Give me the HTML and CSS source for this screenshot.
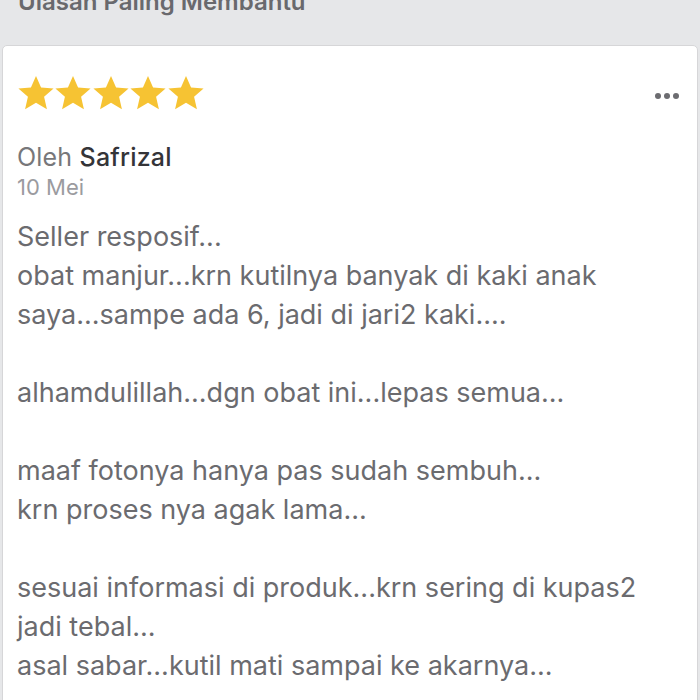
FILE: index.html
```html
<!DOCTYPE html>
<html>
<head>
<meta charset="utf-8">
<link rel="stylesheet" href="styles.css">
</head>
<body>
<div class="page">
  <div class="section-title">Ulasan Paling Membantu</div>
  <div class="card">
    <div class="card-head">
      <div class="stars">
        <svg viewBox="0 0 24 24" class="star"><path d="M12 1.2l3.2 7.3 7.9.7-6 5.2 1.8 7.8L12 18.1 5.1 22.2l1.8-7.8-6-5.2 7.9-.7z"/></svg>
        <svg viewBox="0 0 24 24" class="star"><path d="M12 1.2l3.2 7.3 7.9.7-6 5.2 1.8 7.8L12 18.1 5.1 22.2l1.8-7.8-6-5.2 7.9-.7z"/></svg>
        <svg viewBox="0 0 24 24" class="star"><path d="M12 1.2l3.2 7.3 7.9.7-6 5.2 1.8 7.8L12 18.1 5.1 22.2l1.8-7.8-6-5.2 7.9-.7z"/></svg>
        <svg viewBox="0 0 24 24" class="star"><path d="M12 1.2l3.2 7.3 7.9.7-6 5.2 1.8 7.8L12 18.1 5.1 22.2l1.8-7.8-6-5.2 7.9-.7z"/></svg>
        <svg viewBox="0 0 24 24" class="star"><path d="M12 1.2l3.2 7.3 7.9.7-6 5.2 1.8 7.8L12 18.1 5.1 22.2l1.8-7.8-6-5.2 7.9-.7z"/></svg>
      </div>
      <div class="more"><span></span><span></span><span></span></div>
    </div>
    <div class="author">Oleh <span class="name">Safrizal</span></div>
    <div class="date">10 Mei</div>
    <div class="body">Seller resposif...
obat manjur...krn kutilnya banyak di kaki anak
saya...sampe ada 6, jadi di jari2 kaki....

alhamdulillah...dgn obat ini...lepas semua...

maaf fotonya hanya pas sudah sembuh...
krn proses nya agak lama...

sesuai informasi di produk...krn sering di kupas2
jadi tebal...
asal sabar...kutil mati sampai ke akarnya...</div>
  </div>
</div>
</body>
</html>
```
FILE: styles.css
```css
html, body {
  margin: 0;
  padding: 0;
  background: #e6e7e9;
  overflow: hidden;
}
.page {
  width: 700px;
  height: 700px;
  overflow: hidden;
  font-family: Inter, "Liberation Sans", Arial, sans-serif;
}
.section-title {
  margin-top: -12px;
  height: 57px;
  padding-left: 18px;
  font-size: 24px;
  font-weight: 600;
  color: #69696d;
  line-height: 28px;
}
.card {
  margin: 0 2px;
  background: #fff;
  border: 1px solid #d6d6d8;
  border-radius: 5px;
  padding: 28px 14px 60px 14px;
  height: 800px;
}
.card-head {
  display: flex;
  justify-content: space-between;
  align-items: flex-start;
}
.stars {
  display: flex;
  height: 40px;
}
.star {
  width: 38px;
  height: 38px;
  fill: #f6c333;
  margin-right: -0.6px;
}
.more {
  display: flex;
  gap: 3px;
  margin-top: 19px;
  margin-right: 4px;
}
.more span {
  width: 6px;
  height: 6px;
  border-radius: 50%;
  background: #6c6c70;
}
.author {
  margin-top: 28px;
  font-size: 25px;
  line-height: 30px;
  color: #77777a;
  letter-spacing: 0.2px;
}
.author .name {
  color: #343438;
  font-weight: 500;
}
.date {
  margin-top: 1px;
  font-size: 22px;
  line-height: 28px;
  color: #9b9b9f;
}
.body {
  margin-top: 16px;
  white-space: pre-line;
  font-size: 27px;
  line-height: 39px;
  color: #6b6b6f;
}
```
